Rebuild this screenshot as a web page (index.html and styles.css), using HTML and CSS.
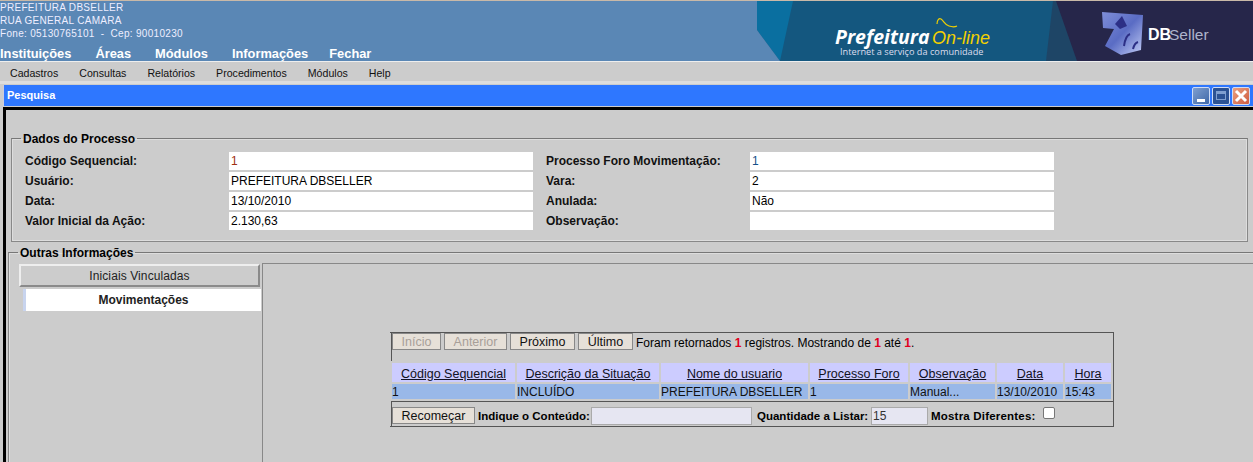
FILE: index.html
```html
<!DOCTYPE html>
<html lang="pt-BR">
<head>
<meta charset="UTF-8" />
<title>Pesquisa</title>
<link rel="stylesheet" href="styles.css">
</head>
<body>
    <header class="top">
        <div class="top-info">
            <div class="address">
                <div>PREFEITURA DBSELLER</div>
                <div>RUA GENERAL CAMARA</div>
                <div>Fone: 05130765101 &nbsp;-&nbsp; Cep: 90010230</div>
            </div>
            <nav class="main-menu">
                <a>Instituições</a>
                <a>Áreas</a>
                <a>Módulos</a>
                <a>Informações</a>
                <a class="menu-last">Fechar</a>
            </nav>
        </div>
        <svg class="banner" width="496" height="60" viewBox="757 1 496 60">
            <defs>
                <linearGradient id="cube" x1="0" y1="0" x2="1" y2="1">
                    <stop offset="0" stop-color="#7f8ed8"/>
                    <stop offset="0.5" stop-color="#5a6cc4"/>
                    <stop offset="1" stop-color="#c4cef6"/>
                </linearGradient>
            </defs>
            <rect x="757" y="1" width="496" height="60" fill="#26264a"/>
            <polygon points="757,1 1056,1 1077,61 757,61" fill="#1e4566"/>
            <polygon points="757,1 1053,1 1046,61 757,61" fill="#14577f"/>
            <polygon points="757,1 793,1 780,61 757,30" fill="#0a6fa0"/>
            <polygon points="757,30 780,61 757,61" fill="#5a87b5"/>
            <text x="835" y="44" class="logo-pref">Prefeitura</text>
            <text x="932" y="44" class="logo-online">On-line</text>
            <path d="M937 24c0-4 2-6 4-5c3 2 4 6 8 7c3 1 6 1 8 0" fill="none" stroke="#f2d000" stroke-width="1.2"/>
            <text x="840" y="55" class="logo-sub">Internet a serviço da comunidade</text>
            <path d="M1102 12l41 3l-2 35l-20 5l-16 -9l9 -17l-11 -1z" fill="url(#cube)"/>
            <path d="M1115 24l7 -8l5 10l-7 3z" fill="#2c2f86"/>
            <path d="M1124 46c1-7 3-11 6-12M1133 49c1-4 2-6 5-7" fill="none" stroke="#2c2f86" stroke-width="2"/>
            <text x="1148" y="40" class="logo-db">DB</text>
            <text x="1169" y="40" class="logo-seller">Seller</text>
        </svg>
    </header>

    <nav class="sub-menu">
        <a>Cadastros</a>
        <a>Consultas</a>
        <a>Relatórios</a>
        <a>Procedimentos</a>
        <a>Módulos</a>
        <a>Help</a>
    </nav>

    <section class="window">
        <div class="titlebar">
            <span class="title">Pesquisa</span>
            <span class="win-buttons">
                <span class="win-btn win-min"><i></i></span>
                <span class="win-btn win-max"><i></i></span>
                <span class="win-btn win-close">
                    <svg width="14" height="14" viewBox="0 0 14 14"><path d="M2 2l10 10M12 2l-10 10" stroke="#fff" stroke-width="3"/></svg>
                </span>
            </span>
        </div>

        <div class="content">
            <fieldset class="box box-dados">
                <legend>Dados do Processo</legend>
                <div class="dados-grid">
                    <label>Código Sequencial:</label><div class="value"><span class="red">1</span></div>
                    <label>Processo Foro Movimentação:</label><div class="value"><span class="navy">1</span></div>
                    <label>Usuário:</label><div class="value">PREFEITURA DBSELLER</div>
                    <label>Vara:</label><div class="value">2</div>
                    <label>Data:</label><div class="value">13/10/2010</div>
                    <label>Anulada:</label><div class="value">Não</div>
                    <label>Valor Inicial da Ação:</label><div class="value">2.130,63</div>
                    <label>Observação:</label><div class="value"></div>
                </div>
            </fieldset>

            <fieldset class="box box-outras">
                <legend>Outras Informações</legend>
                <div class="tabs-area">
                    <div class="tabs">
                        <div class="tab">Iniciais Vinculadas</div>
                        <div class="tab tab-active">Movimentações</div>
                    </div>
                    <div class="panel">
                        <div class="lister">
                            <div class="pager">
                                <button class="btn btn-off">Início</button>
                                <button class="btn btn-off">Anterior</button>
                                <button class="btn">Próximo</button>
                                <button class="btn">Último</button>
                                <span class="pager-text">Foram retornados <b>1</b> registros. Mostrando de <b>1</b> até <b>1</b>.</span>
                            </div>
                            <table class="grid">
                                <colgroup>
                                    <col class="c1"><col class="c2"><col class="c3"><col class="c4"><col class="c5"><col class="c6"><col class="c7">
                                </colgroup>
                                <tr>
                                    <th>Código Sequencial</th>
                                    <th>Descrição da Situação</th>
                                    <th>Nome do usuario</th>
                                    <th>Processo Foro</th>
                                    <th>Observação</th>
                                    <th>Data</th>
                                    <th>Hora</th>
                                </tr>
                                <tr>
                                    <td>1</td>
                                    <td>INCLUÍDO</td>
                                    <td>PREFEITURA DBSELLER</td>
                                    <td>1</td>
                                    <td>Manual...</td>
                                    <td>13/10/2010</td>
                                    <td>15:43</td>
                                </tr>
                            </table>
                            <div class="filter">
                                <button class="btn btn-restart">Recomeçar</button>
                                <label class="f1">Indique o Conteúdo:</label>
                                <span class="field field-text"></span>
                                <label class="f2">Quantidade a Listar:</label>
                                <span class="field field-qty">15</span>
                                <label class="f3">Mostra Diferentes:</label>
                                <span class="check"></span>
                            </div>
                        </div>
                    </div>
                </div>
            </fieldset>
        </div>
    </section>
</body>
</html>
```

FILE: styles.css
```css
* {
    margin:0px;
    padding:0px;
    box-sizing:border-box;
}

html, body {
    height:462px;
    overflow:hidden;
}

body {
    font-family:'Liberation Sans', Arial, sans-serif;
    font-size:12px;
    color:#000;
    background-color:#ccc;
}

/* topo */
.top {
    display:flex;
    justify-content:space-between;
    height:61px;
    border-top:1px solid #c9b9a8;
    background-color:#5a87b5;
}

.address {
    height:43px;
    font-size:10px;
    line-height:13px;
    letter-spacing:0.3px;
    color:#eef;
}

.main-menu {
    display:flex;
    gap:24px;
    font-size:12.85px;
    font-weight:bold;
    line-height:19px;
    color:#fff;
}

.menu-last {
    margin-left:-3px;
}

.banner {
    display:block;
}

.logo-pref {
    font-size:19.5px;
    font-weight:bold;
    font-style:italic;
    fill:#fff;
    font-family:'Open Sans', sans-serif;
}

.logo-online {
    font-size:18px;
    font-style:italic;
    fill:#f2d000;
    font-family:'Liberation Sans', sans-serif;
}

.logo-sub {
    font-size:9.2px;
    fill:#dde;
    font-family:'Open Sans', sans-serif;
}

.logo-db {
    font-size:16px;
    font-weight:bold;
    fill:#fff;
}

.logo-seller {
    font-size:15.5px;
    fill:#aeb4cc;
}

.sub-menu {
    display:flex;
    gap:21px;
    height:23px;
    padding:0px 10px;
    border-top:1px solid #eee;
    border-bottom:3px solid #ddd;
    line-height:22px;
    font-size:10.6px;
    color:#111;
}

/* janela */
.window {
    margin-left:3px;
    margin-top:1px;
}

.titlebar {
    display:flex;
    justify-content:space-between;
    align-items:center;
    height:21px;
    padding:0px 3px 0px 3px;
    border-left:1px solid #ccd;
    color:#fff;
    font-weight:bold;
    font-size:11px;
    line-height:19px;
    background-color:#2e77ff;
}

.title {
    margin-top:-1px;
}

.win-buttons {
    display:flex;
    gap:2px;
}

.win-btn {
    display:flex;
    align-items:center;
    justify-content:center;
    width:18px;
    height:18px;
    border:1px solid #cfdcf5;
    border-radius:2px;
}

.win-min {
    align-items:flex-end;
    padding-bottom:2px;
    background:linear-gradient(135deg, #7f9fd0, #3f68a8);
}

.win-min i {
    width:8px;
    height:3px;
    background-color:#fff;
}

.win-max {
    background-color:#2b5294;
}

.win-max i {
    width:10px;
    height:9px;
    border:1px solid #7f9fd0;
    border-top-width:3px;
}

.win-close {
    background:linear-gradient(135deg, #e8a080, #d05c40);
}

.content {
    height:355px;
    margin-top:1px;
    padding:21px 0px 0px 1px;
    border-top:3px solid #000;
    border-left:3px solid #000;
    overflow:hidden;
}

/* fieldsets */
.box {
    border:1px solid #888;
    border-top-color:#777;
    box-shadow:0px 0px 0px 1px #ddd inset;
}

.box legend {
    margin-left:9px;
    padding:2px 2px 0px;
    font-size:12px;
    font-weight:bold;
    line-height:12px;
}

.box-dados {
    width:1237px;
    height:111px;
    margin-left:4px;
}

.dados-grid {
    display:grid;
    grid-template-columns:204px 304px 217px 304px;
    grid-auto-rows:20px;
    margin:7px 0px 0px 13px;
}

.dados-grid label {
    font-weight:bold;
    line-height:19px;
    color:#111;
}

.dados-grid label:nth-of-type(even) {
    padding-left:13px;
}

.value {
    height:18px;
    padding-left:2px;
    line-height:19px;
    background-color:#fff;
}

.red {
    color:#a03010;
}

.navy {
    color:#15508a;
}

.box-outras {
    margin:3px -10px 0px 1px;
    height:240px;
    border-right:none;
}

.tabs-area {
    display:flex;
    margin:4px 0px 0px 10px;
}

.tabs {
    width:243px;
    flex:none;
    padding-top:1px;
}

.tab {
    height:23px;
    margin-right:2px;
    line-height:21px;
    letter-spacing:0.1px;
    text-align:center;
    color:#222;
    border:2px solid #8a8a8a;
    border-top-color:#eee;
    border-left-color:#eee;
    background-color:#ccc;
}

.tab-active {
    height:22px;
    margin:2px 1px 0px 4px;
    border:none;
    border-left:3px solid #c8d4ee;
    line-height:23px;
    letter-spacing:0px;
    font-weight:bold;
    background-color:#fff;
}

.panel {
    flex:1;
    height:200px;
    border-top:1px solid #888;
    border-left:1px solid #888;
    padding:68px 0px 0px 127px;
}

.lister {
    width:724px;
    height:95px;
    border-top:1px solid #555;
    border-right:1px solid #555;
    border-bottom:1px solid #555;
}

/* botoes */
.pager {
    display:flex;
    align-items:flex-start;
    height:28px;
    margin-left:1px;
    border-left:1px solid #555;
    gap:3px;
}

.btn {
    height:17px;
    padding-top:1px;
    border:1px solid #888;
    font-family:inherit;
    font-size:12.5px;
    color:#111;
    background-color:#e6e0d8;
}

.btn-off {
    color:#a89f98;
}

.pager .btn:nth-child(1) { width:49px; }
.pager .btn:nth-child(2) { width:63px; }
.pager .btn:nth-child(3) { width:65px; }
.pager .btn:nth-child(4) { width:55px; }

.pager-text {
    line-height:21px;
}

.pager-text b {
    color:#e00020;
}

.grid {
    table-layout:fixed;
    width:723px;
    border-collapse:separate;
    border-spacing:2px;
}

.c1 { width:123px; }
.c2 { width:142px; }
.c3 { width:147px; }
.c4 { width:98px; }
.c5 { width:85px; }
.c6 { width:66px; }
.c7 { width:46px; }

.grid th {
    height:19px;
    padding-top:4px;
    font-size:12.5px;
    font-weight:normal;
    line-height:15px;
    text-decoration:underline;
    color:#112;
    background-color:#ccf;
}

.grid td {
    height:15px;
    padding-top:1px;
    line-height:14px;
    white-space:nowrap;
    overflow:hidden;
    color:#111;
    background-color:#99b8e8;
}

.filter {
    display:flex;
    align-items:flex-start;
    height:25px;
    margin-left:1px;
    padding-top:5px;
    border-top:1px solid #555;
    border-left:1px solid #555;
    font-size:11.5px;
}

.filter label {
    flex:none;
    font-weight:bold;
    white-space:nowrap;
    line-height:19px;
}

.btn-restart {
    width:83px;
}

.f1 { width:113px; margin-left:3px; }
.f2 { width:114px; margin-left:5px; }
.f3 { width:106px; margin-left:3px; letter-spacing:0.2px; }

.field {
    flex:none;
    height:18px;
    border:1px solid #aaa;
    line-height:16px;
    padding-left:1px;
    font-size:12px;
    color:#333;
    background-color:#e6e6f2;
}

.field-text {
    width:161px;
}

.field-qty {
    width:57px;
}

.check {
    width:12px;
    height:12px;
    margin:0px 0px 0px 6px;
    border:1px solid #777;
    border-radius:2px;
    background-color:#fff;
}
```
